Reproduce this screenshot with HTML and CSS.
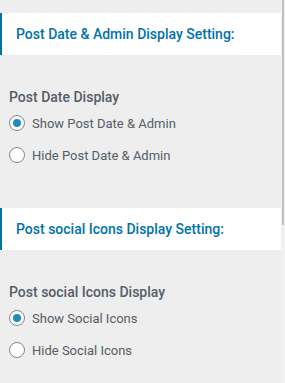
FILE: index.html
```html
<!DOCTYPE html>
<html lang="en">
<head>
    <meta charset="UTF-8">
    <meta name="viewport" content="width=device-width, initial-scale=1.0">
    <title>Display Settings</title>
    <link rel="stylesheet" href="styles.css">
</head>
<body>
    <div class="panel-wrap">
        <div class="panel">
            <div class="section">
                <h3 class="section-title">Post Date &amp; Admin Display Setting:</h3>
                <div class="control">
                    <span class="control-title">Post Date Display</span>
                    <label class="option"><input type="radio" name="post-date" checked> Show Post Date &amp; Admin</label>
                    <label class="option"><input type="radio" name="post-date"> Hide Post Date &amp; Admin</label>
                </div>
            </div>
            <div class="section">
                <h3 class="section-title">Post social Icons Display Setting:</h3>
                <div class="control">
                    <span class="control-title">Post social Icons Display</span>
                    <label class="option"><input type="radio" name="post-social" checked> Show Social Icons</label>
                    <label class="option"><input type="radio" name="post-social"> Hide Social Icons</label>
                </div>
            </div>
        </div>
        <div class="scrollbar"><div class="scrollbar-thumb"></div></div>
    </div>
</body>
</html>
```

FILE: styles.css
```css
body {
    margin: 0;
    background-color: #eeeeee;
    font-family: Roboto, "Noto Sans", sans-serif;
}
.panel-wrap {
    display: flex;
    height: 383px;
}
.panel {
    flex: 1;
}
.section {
    padding-top: 13px;
    padding-bottom: 24px;
}
.section-title {
    margin: 0;
    height: 42px;
    display: flex;
    align-items: center;
    padding-left: 14px;
    border-left: 2px solid #0073aa;
    background-color: #fff;
    color: #0073aa;
    font-size: 14px;
    font-weight: 500;
}
.control {
    display: flex;
    flex-direction: column;
    padding: 32px 9px 0;
}
.control-title {
    font-size: 14px;
    font-weight: 500;
    color: #555d66;
    line-height: 20px;
}
.option {
    display: flex;
    align-items: center;
    gap: 7px;
    height: 32px;
    font-size: 13px;
    color: #555d66;
}
.option input {
    appearance: none;
    margin: 0;
    width: 16px;
    height: 16px;
    border: 1px solid #7e8993;
    border-radius: 50%;
    background-color: #fff;
    display: flex;
    align-items: center;
    justify-content: center;
    box-sizing: border-box;
}
.option input:checked::before {
    content: "";
    width: 8px;
    height: 8px;
    border-radius: 50%;
    background-color: #1e8cbe;
}
.scrollbar {
    width: 4px;
    background-color: #f1f1f1;
}
.scrollbar-thumb {
    margin-left: 1px;
    width: 2px;
    height: 225px;
    background-color: #c1c1c1;
}
```
